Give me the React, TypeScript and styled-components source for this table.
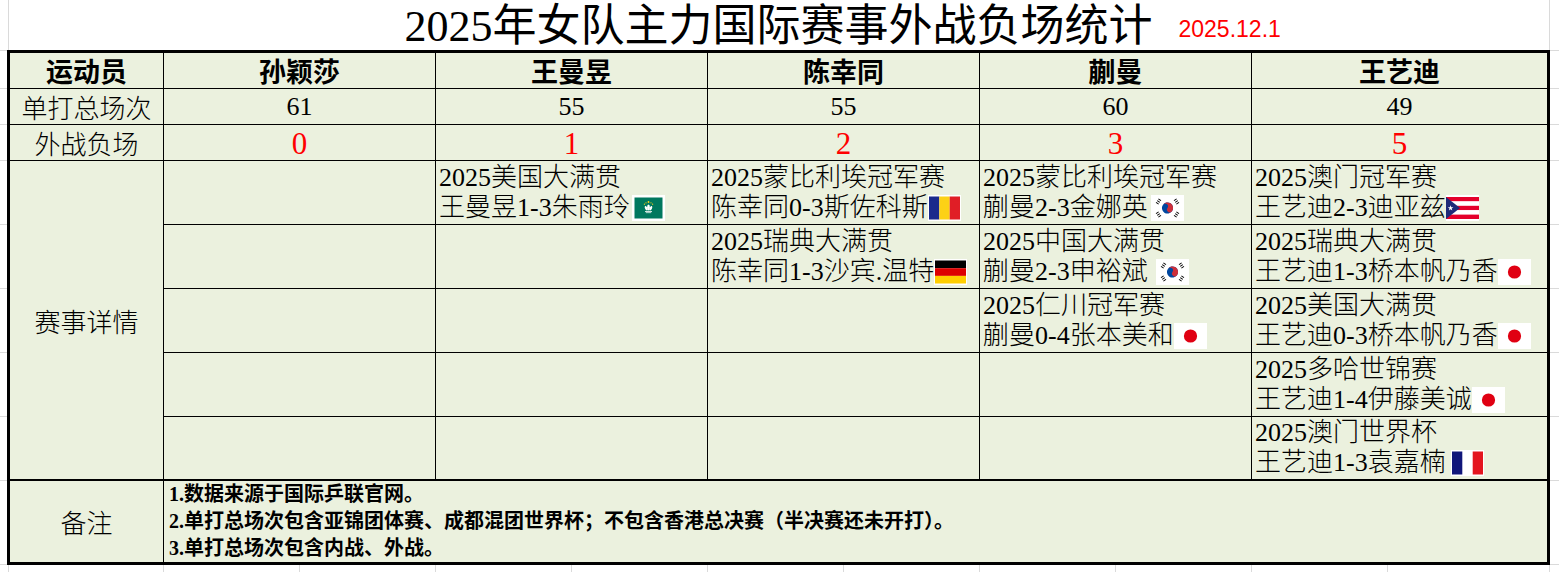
import React from "react";
import styled, { createGlobalStyle } from "styled-components";

const GRID = "#DADADA";
const CELL_BG = "#EBF1DE";
const SERIF = `"Liberation Serif", "Noto Sans CJK SC", serif`;

// excel gridlines that show around the table
const hLines = [50, 88, 124, 160, 224, 288, 352, 416, 480, 564];
const vLinesBottom = [163, 299, 435, 571, 707, 843, 979, 1115, 1251, 1387];
const gridBg = [
  ...hLines.map((y) => `linear-gradient(${GRID}, ${GRID}) 0 ${y}px / 100% 1px no-repeat`),
  ...vLinesBottom.map((x) => `linear-gradient(${GRID}, ${GRID}) ${x}px 565px / 1px 7px no-repeat`),
  `linear-gradient(${GRID}, ${GRID}) 8px 0 / 1px 100% no-repeat`,
  `linear-gradient(${GRID}, ${GRID}) 1549px 0 / 1px 100% no-repeat`,
].join(", ");

const GlobalStyle = createGlobalStyle`
  html, body {
    margin: 0;
    padding: 0;
    background: #fff;
  }
  body {
    font-family: ${SERIF};
    color: #000;
  }
`;

const Page = styled.div`
  width: 1559px;
  height: 572px;
  overflow: hidden;
  box-sizing: border-box;
  padding-left: 7px;
  background: ${gridBg};
  background-color: #fff;
`;

const TitleBar = styled.div`
  display: grid;
  grid-template-columns: 1fr auto 1fr;
  align-items: center;
  width: 1543px;
  height: 50px;
`;

const Title = styled.h1`
  grid-column: 2;
  margin: 0;
  padding-top: 3px;
  font-family: ${SERIF};
  font-weight: 400;
  font-size: 44px;
  line-height: 47px;
  white-space: nowrap;
`;

const DateStamp = styled.span`
  justify-self: start;
  margin-left: 26px;
  padding-top: 8px;
  color: #ff0000;
  font-family: "Liberation Sans", sans-serif;
  font-size: 23px;
`;

const Sheet = styled.div`
  width: 1543px;
  box-sizing: border-box;
  border: 3px solid #000;
  background: #000;
`;

const Grid = styled.div`
  display: grid;
  grid-template-columns: 153px repeat(4, 271px) 295px;
  grid-template-rows: repeat(3, 35px) repeat(4, 63px) 62px;
  gap: 1px;
`;

const Cell = styled.div`
  background: ${CELL_BG};
  display: flex;
  align-items: center;
  justify-content: center;
  font-size: 26px;
  font-weight: 300;
  white-space: nowrap;
`;

const HeadCell = styled(Cell)`
  font-size: 27px;
  font-weight: 700;
`;

const LossCell = styled(Cell)`
  color: #ff0000;
  font-size: 31px;
  padding-top: 3px;
`;

const SpanCell = styled(Cell)<{ $rows: number }>`
  grid-row: span ${(p) => p.$rows};
`;

const DetailCell = styled.div`
  background: ${CELL_BG};
  display: flex;
  flex-direction: column;
  justify-content: center;
  padding-left: 3px;
  font-size: 26px;
  font-weight: 300;
  line-height: 30px;
  white-space: nowrap;
`;

const Line = styled.div`
  display: flex;
  align-items: center;
  height: 30px;
`;

const NotesRow = styled.div`
  display: grid;
  grid-template-columns: 153px 1fr;
  gap: 1px;
  margin-top: 2px;
  height: 81px;
`;

const NotesText = styled.div`
  background: ${CELL_BG};
  display: flex;
  flex-direction: column;
  justify-content: center;
  padding-left: 5px;
  font-size: 20px;
  font-weight: 700;
  line-height: 27px;
  white-space: nowrap;
`;

const FlagSvg = styled.svg<{ $gap: number }>`
  display: block;
  flex: none;
  margin-left: ${(p) => p.$gap}px;
`;

type FlagCode = "mo" | "ro" | "de" | "kr" | "pr" | "jp" | "fr";

const Trigram = ({ x, y, r }: { x: number; y: number; r: number }) => (
  <g transform={`translate(${x} ${y}) rotate(${r})`} fill="#000">
    <rect x={-2.6} y={-1.6} width={0.9} height={3.2} />
    <rect x={-0.45} y={-1.6} width={0.9} height={3.2} />
    <rect x={1.7} y={-1.6} width={0.9} height={3.2} />
  </g>
);

const Flag = ({ code, gap = 0 }: { code: FlagCode; gap?: number }) => {
  let body: React.ReactNode = null;
  if (code === "mo") {
    body = (
      <>
        <rect x="2.5" y="2.5" width="28" height="21" fill="#00785E" />
        <g fill="#fff">
          <ellipse cx="16.5" cy="12.5" rx="1.4" ry="3" />
          <ellipse cx="14.2" cy="13.2" rx="1.2" ry="2.4" transform="rotate(-25 14.2 13.2)" />
          <ellipse cx="18.8" cy="13.2" rx="1.2" ry="2.4" transform="rotate(25 18.8 13.2)" />
          <rect x="13" y="16" width="7" height="0.8" />
          <rect x="13.8" y="17.4" width="5.4" height="0.7" />
        </g>
        <g fill="#FBD116">
          <circle cx="16.5" cy="7" r="0.9" />
          <circle cx="14" cy="7.8" r="0.6" />
          <circle cx="19" cy="7.8" r="0.6" />
          <circle cx="12.4" cy="9.2" r="0.6" />
          <circle cx="20.6" cy="9.2" r="0.6" />
        </g>
      </>
    );
  } else if (code === "ro") {
    body = (
      <>
        <rect x="1" y="1.5" width="10.3" height="23" fill="#1B2A8C" />
        <rect x="11.3" y="1.5" width="10.4" height="23" fill="#FCD116" />
        <rect x="21.7" y="1.5" width="10.3" height="23" fill="#E01E26" />
      </>
    );
  } else if (code === "de") {
    body = (
      <>
        <rect x="1" y="1.5" width="31" height="7.7" fill="#000" />
        <rect x="1" y="9.2" width="31" height="7.7" fill="#DD0000" />
        <rect x="1" y="16.9" width="31" height="7.6" fill="#FFCE00" />
      </>
    );
  } else if (code === "kr") {
    body = (
      <>
        <g transform="translate(16.5 13) rotate(33.7)">
          <circle r="5.6" fill="#0047A0" />
          <path d="M-5.6 0 A5.6 5.6 0 0 1 5.6 0 A2.8 2.8 0 0 1 0 0 A2.8 2.8 0 0 0 -5.6 0 Z" fill="#CD2E3A" />
        </g>
        <Trigram x={7.5} y={6.5} r={-56.3} />
        <Trigram x={25.5} y={19.5} r={-56.3} />
        <Trigram x={25.5} y={6.5} r={56.3} />
        <Trigram x={7.5} y={19.5} r={56.3} />
      </>
    );
  } else if (code === "pr") {
    body = (
      <>
        {[0, 1, 2, 3, 4].map((i) => (
          <rect key={i} x="0" y={2 + i * 4.4} width="33" height="4.4" fill={i % 2 === 0 ? "#E4002B" : "#fff"} />
        ))}
        <path d="M0 2 L14 13 L0 24 Z" fill="#1E2A78" />
        <path d="M4.6 10.2 L5.3 12.2 L7.4 12.2 L5.7 13.4 L6.3 15.4 L4.6 14.2 L2.9 15.4 L3.5 13.4 L1.8 12.2 L3.9 12.2 Z" fill="#fff" />
      </>
    );
  } else if (code === "jp") {
    body = <circle cx="16.5" cy="13" r="6.6" fill="#E00012" />;
  } else if (code === "fr") {
    body = (
      <>
        <rect x="1" y="1.5" width="10.3" height="23" fill="#10167A" />
        <rect x="21.7" y="1.5" width="10.3" height="23" fill="#E4151F" />
      </>
    );
  }
  return (
    <FlagSvg $gap={gap} width="33" height="26" viewBox="0 0 33 26">
      <rect width="33" height="26" fill="#fff" />
      {body}
    </FlagSvg>
  );
};

type Match = { event: string; result: string; flag: FlagCode; gap?: number };
type Player = { name: string; total: number; losses: number; matches: Match[] };

const players: Player[] = [
  { name: "孙颖莎", total: 61, losses: 0, matches: [] },
  {
    name: "王曼昱",
    total: 55,
    losses: 1,
    matches: [{ event: "2025美国大满贯", result: "王曼昱1-3朱雨玲", flag: "mo", gap: 2 }],
  },
  {
    name: "陈幸同",
    total: 55,
    losses: 2,
    matches: [
      { event: "2025蒙比利埃冠军赛", result: "陈幸同0-3斯佐科斯", flag: "ro" },
      { event: "2025瑞典大满贯", result: "陈幸同1-3沙宾.温特", flag: "de" },
    ],
  },
  {
    name: "蒯曼",
    total: 60,
    losses: 3,
    matches: [
      { event: "2025蒙比利埃冠军赛", result: "蒯曼2-3金娜英", flag: "kr", gap: 3 },
      { event: "2025中国大满贯", result: "蒯曼2-3申裕斌", flag: "kr", gap: 8 },
      { event: "2025仁川冠军赛", result: "蒯曼0-4张本美和", flag: "jp" },
    ],
  },
  {
    name: "王艺迪",
    total: 49,
    losses: 5,
    matches: [
      { event: "2025澳门冠军赛", result: "王艺迪2-3迪亚兹", flag: "pr" },
      { event: "2025瑞典大满贯", result: "王艺迪1-3桥本帆乃香", flag: "jp" },
      { event: "2025美国大满贯", result: "王艺迪0-3桥本帆乃香", flag: "jp" },
      { event: "2025多哈世锦赛", result: "王艺迪1-4伊藤美诚", flag: "jp" },
      { event: "2025澳门世界杯", result: "王艺迪1-3袁嘉楠", flag: "fr", gap: 5 },
    ],
  },
];

const DETAIL_ROWS = 5;

const notes = [
  "1.数据来源于国际乒联官网。",
  "2.单打总场次包含亚锦团体赛、成都混团世界杯；不包含香港总决赛（半决赛还未开打）。",
  "3.单打总场次包含内战、外战。",
];

export default function App() {
  const detailRows = Array.from({ length: DETAIL_ROWS }, (_, r) => r);
  return (
    <>
      <GlobalStyle />
      <Page>
        <TitleBar>
          <Title>2025年女队主力国际赛事外战负场统计</Title>
          <DateStamp>2025.12.1</DateStamp>
        </TitleBar>
        <Sheet>
          <Grid>
            <HeadCell>运动员</HeadCell>
            {players.map((p) => (
              <HeadCell key={p.name}>{p.name}</HeadCell>
            ))}
            <Cell>单打总场次</Cell>
            {players.map((p) => (
              <Cell key={p.name}>{p.total}</Cell>
            ))}
            <Cell>外战负场</Cell>
            {players.map((p) => (
              <LossCell key={p.name}>{p.losses}</LossCell>
            ))}
            <SpanCell $rows={DETAIL_ROWS}>赛事详情</SpanCell>
            {detailRows.map((r) =>
              players.map((p) => {
                const m = p.matches[r];
                return (
                  <DetailCell key={`${p.name}-${r}`}>
                    {m && (
                      <>
                        <Line>{m.event}</Line>
                        <Line>
                          {m.result}
                          <Flag code={m.flag} gap={m.gap} />
                        </Line>
                      </>
                    )}
                  </DetailCell>
                );
              })
            )}
          </Grid>
          <NotesRow>
            <Cell>备注</Cell>
            <NotesText>
              {notes.map((n) => (
                <div key={n}>{n}</div>
              ))}
            </NotesText>
          </NotesRow>
        </Sheet>
      </Page>
    </>
  );
}
